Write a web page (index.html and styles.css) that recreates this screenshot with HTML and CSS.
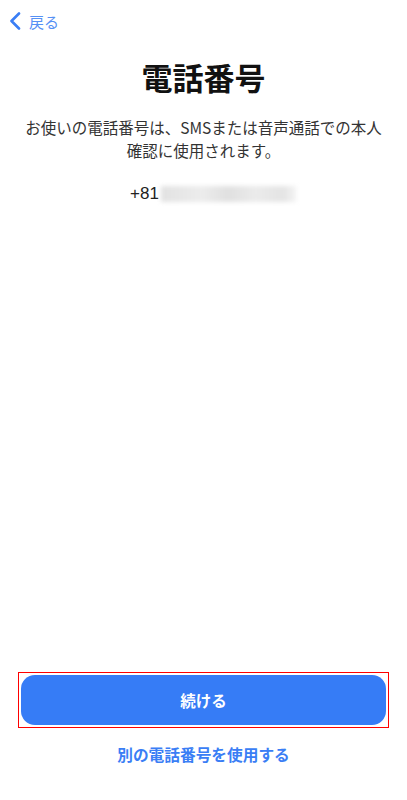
FILE: index.html
```html
<!DOCTYPE html>
<html lang="ja">
<head>
  <meta charset="utf-8">
  <meta name="viewport" content="width=device-width, initial-scale=1.0" />
  <title>電話番号</title>
  <link rel="stylesheet" href="styles.css">
</head>
<body>
<div class="screen">
  <!-- 上部ナビ -->
  <div class="nav">
    <a class="back" href="#">
      <svg class="chevron" width="12" height="18" viewBox="0 0 12 18">
        <path d="M10 1.5 L2.5 9 L10 16.5" fill="none" stroke="#3a7ef5" stroke-width="2.6" stroke-linecap="round" stroke-linejoin="round"/>
      </svg>
      <span>戻る</span>
    </a>
  </div>

  <h1 class="title">電話番号</h1>
  <p class="desc">お使いの電話番号は、SMSまたは音声通話での本人<br>確認に使用されます。</p>

  <div class="phone">
    <span class="code">+81</span>
    <span class="masked"></span>
  </div>

  <div class="spacer"></div>

  <!-- 下部ボタン -->
  <div class="actions">
    <div class="highlight">
      <button class="primary">続ける</button>
    </div>
    <a class="alt" href="#">別の電話番号を使用する</a>
  </div>
</div>
</body>
</html>
```

FILE: styles.css
```css
body {
  margin: 0;
  background: #fff;
  font-family: "Noto Sans CJK JP", "Noto Sans", sans-serif;
  color: #222;
}

.screen {
  height: 800px;
  display: flex;
  flex-direction: column;
  box-sizing: border-box;
}

.nav {
  height: 42px;
  display: flex;
  align-items: center;
  padding-left: 9px;
}

.back {
  display: flex;
  align-items: center;
  gap: 8px;
  text-decoration: none;
  color: #5691f5;
  font-size: 15px;
}

.title {
  margin: 15px 0 0;
  text-align: center;
  font-size: 31px;
  line-height: 40px;
  font-weight: 700;
  color: #111;
}

.desc {
  margin: 19px 0 0;
  text-align: center;
  font-size: 15.5px;
  line-height: 23px;
  color: #333;
}

.phone {
  margin-top: 20px;
  display: flex;
  align-items: center;
  padding-left: 130px;
  height: 24px;
}

.code {
  font-family: "Liberation Sans", Arial, sans-serif;
  font-size: 17px;
  color: #222;
}

/* 伏せ字部分（ぼかし） */
.masked {
  display: block;
  width: 135px;
  height: 16px;
  margin-left: 2px;
  background: linear-gradient(90deg, #e2e2e2, #ececec 30%, #e0e0e0 50%, #ebebeb 70%, #e4e4e4 90%, #f3f3f3);
  filter: blur(2px);
}

.spacer {
  flex: 1;
}

.actions {
  padding: 0 18px 33px;
  display: flex;
  flex-direction: column;
  align-items: center;
}

.highlight {
  width: 100%;
  box-sizing: border-box;
  border: 1px solid #f00;
  padding: 2px;
}

.primary {
  display: block;
  width: 100%;
  height: 50px;
  border: none;
  border-radius: 14px;
  background: #367cf6;
  color: #fff;
  font-family: inherit;
  font-size: 15.5px;
  font-weight: 700;
  cursor: pointer;
}

.alt {
  margin-top: 15px;
  line-height: 24px;
  color: #3a7ef5;
  font-size: 15.7px;
  font-weight: 700;
  text-decoration: none;
}
```
